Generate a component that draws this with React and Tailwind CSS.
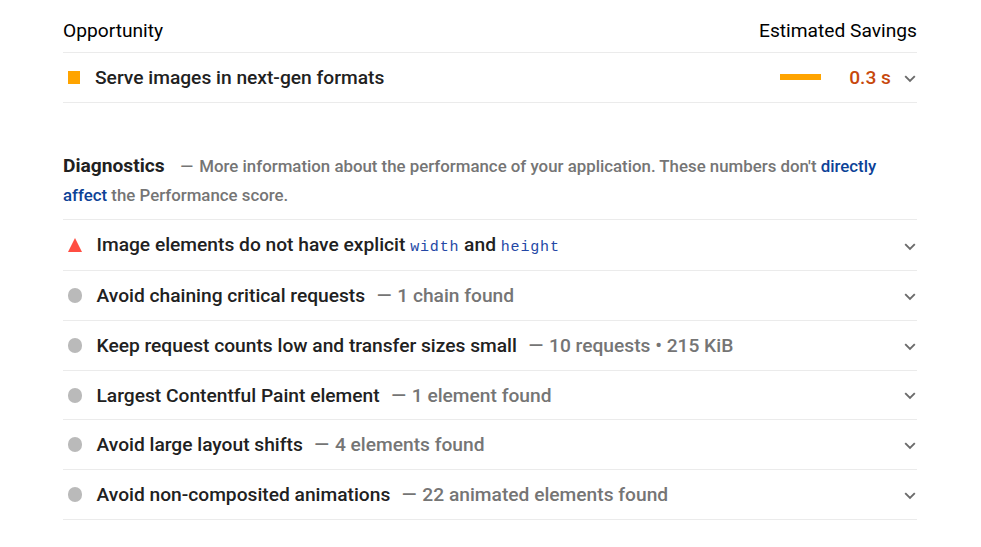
import React from "react";

function Chevron({ className = "mt-[3px]" }) {
  return (
    <svg className={`${className} mr-px h-[8px] w-[12px] shrink-0`} viewBox="0 0 12 8" fill="none" stroke="#6b6b6b" strokeWidth="1.9">
      <path d="M1.2 1.2 6 6l4.8-4.8" />
    </svg>
  );
}

function Mono({ children }) {
  return (
    <code className="font-['Liberation_Mono',monospace] text-[15px] font-normal tracking-[0.84px] text-[#2447a5]">{children}</code>
  );
}

const rows = [
  { title: "Avoid chaining critical requests", note: "1 chain found", size: "h-[50px]", text: "pt-px" },
  { title: "Keep request counts low and transfer sizes small", note: "10 requests • 215 KiB", size: "h-[50px]", text: "pt-px" },
  { title: "Largest Contentful Paint element", note: "1 element found", size: "h-[49px]", text: "pt-[2px]", chevron: "mt-[2px]" },
  { title: "Avoid large layout shifts", note: "4 elements found", size: "h-[50px]", text: "pt-px" },
  { title: "Avoid non-composited animations", note: "22 animated elements found", size: "h-[50px]", text: "pt-px" },
];

export default function App() {
  return (
    <main className="h-[547px] w-[981px] overflow-hidden bg-white pl-[63px] pr-[64px] pt-[9px] font-[Roboto,sans-serif] text-[19.2px] text-[#212121]">
      <header className="flex h-[44px] items-center justify-between border-b border-[#ebebeb] text-black">
        <span className="pt-px">Opportunity</span>
        <span className="pt-px">Estimated Savings</span>
      </header>
      <div className="flex h-[50px] items-center border-b border-[#ebebeb] font-medium">
        <i className="ml-[5px] h-[13px] w-[12px] bg-[#ffa400]" />
        <span className="ml-[15px] flex-1 pt-px">Serve images in next-gen formats</span>
        <i className="mb-px h-[6px] w-[41px] bg-[#ffa400]" />
        <span className="w-[70px] pt-px text-right text-[#c7480c]">0.3 s</span>
        <span className="ml-[13px] flex"><Chevron /></span>
      </div>
      <section className="mt-[48px] h-[69px] border-b border-[#ebebeb] text-[16.84px] font-medium leading-[29px] text-[#757575]">
        <h2 className="mr-[15.5px] inline text-[19.2px] font-bold text-[#212121]">Diagnostics</h2>
        <span className="mr-[2px]">—</span> More information about the performance of your application. These numbers don't <a className="text-[#0c4297]">directly<br />affect</a> the Performance score.
      </section>
      <div className="flex h-[51px] items-center border-b border-[#ebebeb] font-medium">
        <svg className="ml-[5px] h-[14px] w-[14px]" viewBox="0 0 14 14"><path d="M7 0 14 14H0Z" fill="#ff4e42" /></svg>
        <span className="ml-[14.5px] flex-1">Image elements do not have explicit <Mono>width</Mono> and <Mono>height</Mono></span>
        <Chevron />
      </div>
      {rows.map((r) => (
        <div key={r.title} className={`${r.size} flex items-center border-b border-[#ebebeb] font-medium`}>
          <i className="ml-[5px] h-[15px] w-[14px] rounded-full bg-[#bababa]" />
          <span className={`${r.text} ml-[14.5px]`}>{r.title}</span>
          <span className={`${r.text} ml-[11.5px] flex-1 text-[#757575]`}><span className="mr-px">—</span> {r.note}</span>
          <Chevron className={r.chevron} />
        </div>
      ))}
    </main>
  );
}
